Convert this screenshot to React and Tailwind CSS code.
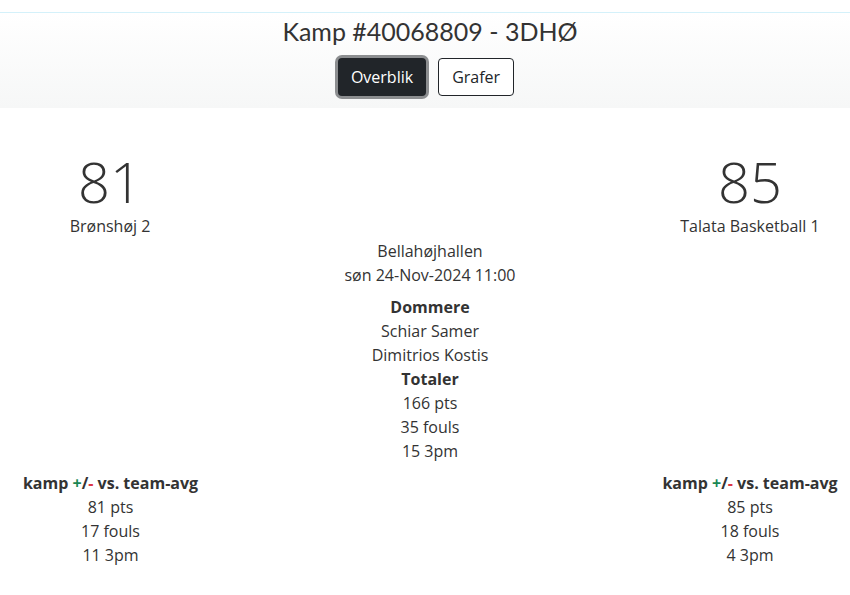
import React from 'react';

const font = { fontFamily: '"Open Sans", "Liberation Sans", sans-serif' };

const Stats = ({ pts, fouls, threes }) => (
  <div className="flex flex-col items-center leading-6">
    <div className="font-bold">
      kamp <span className="text-[#198754]">+</span>/<span className="text-[#dc3545]">-</span> vs. team-avg
    </div>
    <div>{pts} pts</div>
    <div>{fouls} fouls</div>
    <div>{threes} 3pm</div>
  </div>
);

const App = () => {
  return (
    <div className="w-[850px] h-[595px] bg-white text-[#333] text-base overflow-hidden" style={font}>
      <div className="h-3" />
      <div className="border-t border-[#d4f1fa] h-[96px] bg-gradient-to-b from-white to-[#f6f7f7] flex flex-col items-center">
        <h1 className="text-[25px] leading-8 mt-[2px] ml-[10px] text-[#333]" style={{ fontFamily: 'Lato, "Open Sans", sans-serif' }}>
          Kamp #40068809 - 3DHØ
        </h1>
        <div className="flex gap-3 mt-[11px] ml-[2px]">
          <button className="h-[38px] px-[13px] rounded bg-[#212529] text-white ring-[3px] ring-[#8c8e90]">Overblik</button>
          <button className="h-[38px] px-[13px] rounded bg-white text-[#212529] border border-[#212529]">Grafer</button>
        </div>
      </div>

      <div className="flex mt-[39px]">
        <div className="w-[220px] flex flex-col items-center">
          <div className="text-[56px] font-light leading-[62px] mt-[3px] mb-[2px]">81</div>
          <div className="leading-6">Brønshøj 2</div>
        </div>
        <div className="ml-auto w-[200px] flex flex-col items-center">
          <div className="text-[56px] font-light leading-[62px] mt-[3px] mb-[2px]">85</div>
          <div className="leading-6">Talata Basketball 1</div>
        </div>
      </div>

      <div className="flex flex-col items-center leading-6 pl-[10px] mt-px">
        <div>Bellahøjhallen</div>
        <div>søn 24-Nov-2024 11:00</div>
        <div className="font-bold mt-2">Dommere</div>
        <div>Schiar Samer</div>
        <div>Dimitrios Kostis</div>
        <div className="font-bold">Totaler</div>
        <div>166 pts</div>
        <div>35 fouls</div>
        <div>15 3pm</div>
      </div>

      <div className="flex mt-2">
        <div className="w-[221px]">
          <Stats pts={81} fouls={17} threes={11} />
        </div>
        <div className="ml-auto w-[200px]">
          <Stats pts={85} fouls={18} threes={4} />
        </div>
      </div>
    </div>
  );
};

export default App;
